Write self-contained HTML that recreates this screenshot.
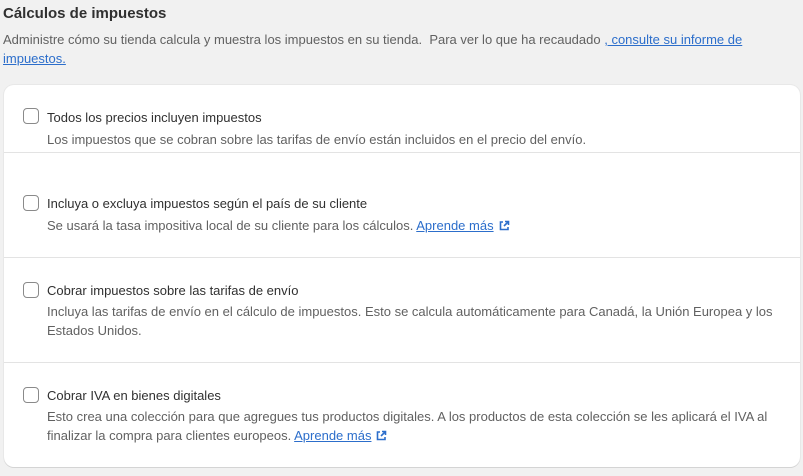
<!DOCTYPE html>
<html><head><meta charset="utf-8"><style>
body{margin:0;background:#f1f1f1;font-family:"Liberation Sans",sans-serif;width:803px;height:476px;overflow:hidden;position:relative;color:#303030}
.h{position:absolute;left:3px;top:5px;font-size:15px;font-weight:bold;color:#303030}
.d{position:absolute;left:3px;top:30px;width:790px;font-size:13px;line-height:19px;color:#616161}
a{color:#2c6ecb;text-decoration:underline}
.card{position:absolute;left:4px;top:85px;width:796px;height:382px;background:#fff;border-radius:10px;box-shadow:0 1px 0 #d4d4d4,0 0 0 1px #e8e8e8}
.row{position:absolute;left:0;width:796px;border-top:1px solid #e3e3e3}
.cb{position:absolute;left:19px;width:14px;height:14px;border:1.6px solid #8a8a8a;border-radius:4px}
.t{position:absolute;left:43px;font-size:13px;color:#303030}
.s{position:absolute;left:43px;width:735px;font-size:13px;line-height:19px;color:#616161}
.ic{display:inline-block;vertical-align:-1px;margin-left:5px}
</style></head><body>
<div class="h">Cálculos de impuestos</div>
<div class="d">Administre cómo su tienda calcula y muestra los impuestos en su tienda.&nbsp; Para ver lo que ha recaudado <a>, consulte su informe de impuestos.</a></div>
<div class="card">
 <div class="cb" style="top:23px"></div>
 <div class="t" style="top:25px">Todos los precios incluyen impuestos</div>
 <div class="s" style="top:45px">Los impuestos que se cobran sobre las tarifas de envío están incluidos en el precio del envío.</div>
 <div class="row" style="top:67px"></div>
 <div class="cb" style="top:110px"></div>
 <div class="t" style="top:111px">Incluya o excluya impuestos según el país de su cliente</div>
 <div class="s" style="top:131px">Se usará la tasa impositiva local de su cliente para los cálculos. <a>Aprende más</a><svg class="ic" width="11" height="11" viewBox="0 0 11 11"><path d="M6 1.5h3.5V5M9.5 1.5L5 6M4 2H1.5v7.5H9V7" fill="none" stroke="#2c6ecb" stroke-width="1.6"/></svg></div>
 <div class="row" style="top:172px"></div>
 <div class="cb" style="top:197px"></div>
 <div class="t" style="top:198px">Cobrar impuestos sobre las tarifas de envío</div>
 <div class="s" style="top:217px">Incluya las tarifas de envío en el cálculo de impuestos. Esto se calcula automáticamente para Canadá, la Unión Europea y los Estados Unidos.</div>
 <div class="row" style="top:277px"></div>
 <div class="cb" style="top:302px"></div>
 <div class="t" style="top:303px">Cobrar IVA en bienes digitales</div>
 <div class="s" style="top:322px">Esto crea una colección para que agregues tus productos digitales. A los productos de esta colección se les aplicará el IVA al finalizar la compra para clientes europeos. <a>Aprende más</a><svg class="ic" width="11" height="11" viewBox="0 0 11 11"><path d="M6 1.5h3.5V5M9.5 1.5L5 6M4 2H1.5v7.5H9V7" fill="none" stroke="#2c6ecb" stroke-width="1.6"/></svg></div>
</div>
</body></html>
